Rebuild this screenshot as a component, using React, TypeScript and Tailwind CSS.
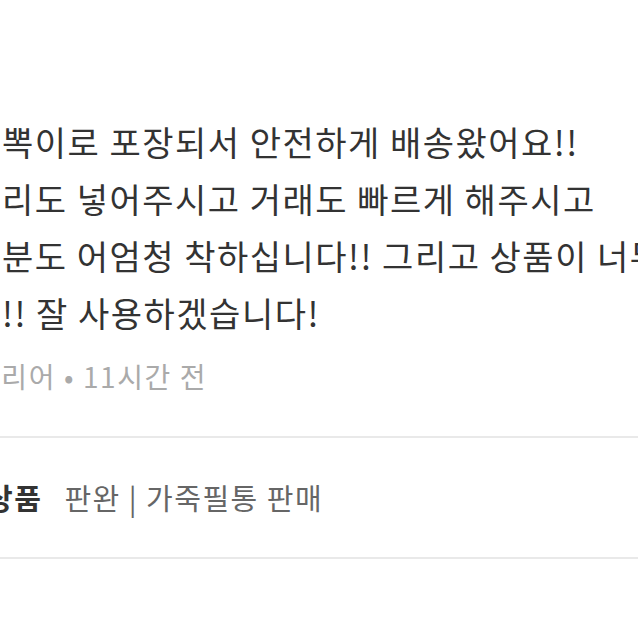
import React from "react";

export default function App() {
  return (
    <div
      className="w-[638px] h-[638px] bg-white overflow-hidden"
      style={{ fontFamily: '"Noto Sans CJK KR", "Noto Sans", sans-serif' }}
    >
      <div className="pt-[113px] whitespace-nowrap">
        <div className="text-[34px] leading-[57px] tracking-[1.5px] text-[#333333] pl-[2px]">
          <div>뽁이로 포장되서 안전하게 배송왔어요!!</div>
          <div>리도 넣어주시고 거래도 빠르게 해주시고</div>
          <div>분도 어엄청 착하십니다!! 그리고 상품이 너무</div>
          <div>!! 잘 사용하겠습니다!</div>
        </div>
        <div className="mt-[16px] text-[28px] leading-[38px] tracking-[1.6px] text-[#aaaaaa]">
          <span className="ml-[-26px]">캐리어 • 11시간 전</span>
        </div>
      </div>
      <div className="mt-[41px] h-[123px] border-y-2 border-[#e9e9e9] flex items-center whitespace-nowrap text-[29px] tracking-[1.5px]">
        <span className="ml-[-14px] font-bold text-[#333333]">상품</span>
        <span className="ml-[22px] text-[#666666]">판완 | 가죽필통 판매</span>
      </div>
    </div>
  );
}
